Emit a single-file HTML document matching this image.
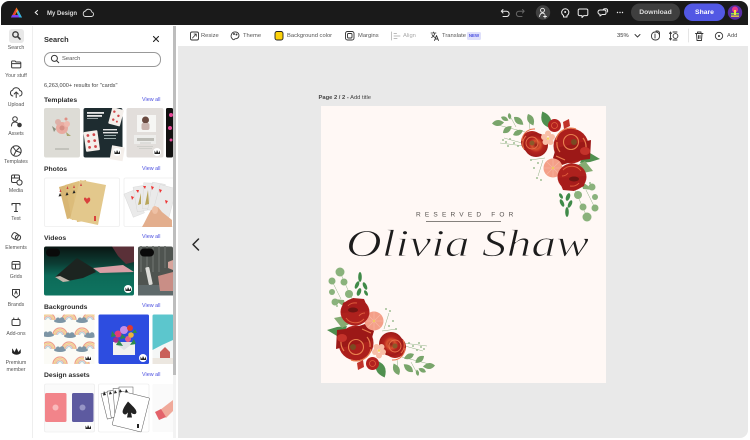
<!DOCTYPE html>
<html><head><meta charset="utf-8">
<style>
html,body{margin:0;padding:0;width:750px;height:440px;overflow:hidden;background:#fff}
body{position:relative;font-family:"Liberation Sans",sans-serif;color:#2c2c2c;filter:blur(.3px)}
.a{position:absolute}
.t{position:absolute;white-space:nowrap;line-height:1;transform:translateY(1px)}
.rail{font-size:5.2px;color:#555;text-align:center;width:32px;left:0}
.h{font-size:6.8px;font-weight:bold;left:44px;color:#2c2c2c}
.v{font-size:5.4px;color:#4b4fe0;left:142px}
.tb{font-size:5.8px;color:#555}
</style></head><body>
<!-- window -->
<div class="a" style="left:0;top:0;width:750px;height:440px;background:#fff"></div>
<div class="a" style="left:178px;top:46px;width:570px;height:392px;background:#e9e9e9;border-radius:0 0 8px 0"></div>
<div class="a" style="left:1px;top:1px;width:747px;height:24px;background:#1a1a1a;border-radius:8px 8px 0 0"></div>
<div class="a" style="left:32px;top:26px;width:1px;height:412px;background:#eee"></div>
<div class="a" style="left:173px;top:26px;width:3px;height:412px;background:#f3f3f3"></div>
<div class="a" style="left:173px;top:26px;width:3px;height:349px;background:#bdbdbd"></div>

<!-- top bar -->
<svg class="a" style="left:0;top:0" width="750" height="26" viewBox="0 0 750 26" fill="none" stroke-linecap="round" stroke-linejoin="round">
 <path d="M16.5 7.500 L22 17.500 H19 L16.500 12 L14 17.500 H11 Z" fill="#f5a623"/>
 <path d="M16.500 7.500 L11 17.500 H13.500 L16.500 11 Z" fill="#e8392b"/>
 <path d="M15 15 H19 L20 17.500 H11 L12 15Z" fill="#7a3ff2"/>
 <path d="M18 10 L22 17.500 H19.500 L17 12.500Z" fill="#2fb3e8"/>
 <path d="M37.500 10.500 L35.200 12.500 L37.500 14.500" stroke="#eee" stroke-width="1.100"/>
 <path d="M85 16.500 H91.500 a2.300 2.300 0 0 0 .3 -4.500 a3.400 3.400 0 0 0 -6.300 -1 a2.900 2.900 0 0 0 -.5 5.500Z" stroke="#ddd" stroke-width=".9"/>
 <path d="M503 9.500 L501.300 11.200 L503 13 M501.500 11.200 H506.500 a2.600 2.600 0 0 1 0 5.300 H503" stroke="#e8e8e8" stroke-width="1"/>
 <path d="M522.500 9.500 L524.200 11.200 L522.500 13 M524 11.200 H519 a2.600 2.600 0 0 0 0 5.300 H522" stroke="#666" stroke-width="1"/>
 <circle cx="543" cy="12.500" r="7.200" fill="#414141"/>
 <circle cx="542.500" cy="10.300" r="2" stroke="#eee" stroke-width=".9"/>
 <path d="M539.500 16.500 C540 14 541 13 542.500 13 C543.500 13 544 13.400 544.500 14 M545 15 V18 M543.600 16.500 H546.500" stroke="#eee" stroke-width=".9"/>
 <path d="M563.500 15.500 a3.600 3.600 0 1 1 3.500 0 V17 h-3.500Z" stroke="#eee" stroke-width="1"/><circle cx="565.200" cy="12" r="1" fill="#eee"/>
 <path d="M579.500 9 H586.500 a1.300 1.300 0 0 1 1.300 1.300 V14.300 a1.300 1.300 0 0 1 -1.300 1.300 H583.800 L582 17.500 V15.600 H579.500 a1.300 1.300 0 0 1 -1.300 -1.300 V10.300 a1.300 1.300 0 0 1 1.300 -1.300Z" stroke="#eee" stroke-width="1"/>
 <path d="M600 10 H604.500 a1.500 1.500 0 0 1 1.500 1.500 V13 a1.500 1.500 0 0 1 -1.500 1.500 H602 L600 16 V14.300 a2 2 0 0 1 -2 -2 A2.300 2.300 0 0 1 600 10Z" stroke="#eee" stroke-width="1"/>
 <path d="M603 10 A2 2 0 0 1 605 8.800 H606 a1.600 1.600 0 0 1 1.600 1.600 V12 " stroke="#eee" stroke-width="1"/>
 <circle cx="617.500" cy="12.500" r=".7" fill="#eee"/><circle cx="620" cy="12.500" r=".7" fill="#eee"/><circle cx="622.500" cy="12.500" r=".7" fill="#eee"/>
 <rect x="631" y="3.500" width="49" height="17.500" rx="8.700" fill="#3f3f3f"/>
 <rect x="684" y="3.500" width="41" height="17.500" rx="8.700" fill="#5258e4"/>
 <circle cx="735" cy="12.500" r="7.200" fill="#5a2ea6"/>
 <circle cx="735" cy="9.500" r="3" fill="#e8388c"/><rect x="731" y="13" width="8" height="1.500" fill="#7fe04a"/><rect x="734" y="10" width="2" height="5" fill="#f3e13c"/><rect x="731" y="15.500" width="8" height="1.300" fill="#f3e13c"/>
</svg>
<div class="t" style="left:47px;top:9.500px;font-size:6px;font-weight:bold;color:#ddd">My Design</div>
<div class="t" style="left:631px;width:49px;top:9px;font-size:6.800px;font-weight:bold;color:#ddd;text-align:center">Download</div>
<div class="t" style="left:684px;width:41px;top:9px;font-size:6.800px;font-weight:bold;color:#fff;text-align:center">Share</div>

<!-- rail -->
<div class="a" style="left:9px;top:29px;width:15px;height:14px;border-radius:3px;background:#e8e8e8"></div>
<svg class="a" style="left:0;top:26px" width="33" height="350" viewBox="0 26 33 350" fill="none" stroke="#3a3a3a" stroke-width="1" stroke-linecap="round" stroke-linejoin="round">
 <circle cx="15.500" cy="34.500" r="2.700" stroke-width="1.400"/><path d="M17.600 36.600 L20 39" stroke-width="1.600"/>
 <path d="M12 61 H15 L16 62 H20 a.8.8 0 0 1 .8.8 V67 a.9.9 0 0 1 -.9.9 H12.500 a.9.9 0 0 1 -.9-.9 V61.600Z"/><path d="M11.800 63.600 H20.600"/>
 <path d="M12.800 96 A3 3 0 0 1 12.600 90.200 A3.800 3.800 0 0 1 19.800 90.500 A2.800 2.800 0 0 1 19.600 96 M16.200 97.500 V92 M14.200 94 L16.200 92 L18.200 94"/>
 <circle cx="15" cy="119" r="2.300"/><path d="M11.500 126 C11.500 123 13 122 15 122 C16 122 17 122.500 17.500 123"/><circle cx="19.500" cy="125" r="1.800" fill="#3a3a3a"/>
 <circle cx="16" cy="151" r="5.200"/><path d="M13 147 L16 151 L19.500 147.500 M14 155 L16 151 L20.500 152.500"/>
 <rect x="11.500" y="175" width="8" height="7.500" rx="1.500"/><path d="M11.500 178 H19.500 M14.500 175 V178"/><circle cx="19.500" cy="182.500" r="2.600" fill="#fff"/>
 <path d="M12 203.500 H20 M16 203.500 V211.500 M14.500 211.500 H17.500 M12 203.500 V205 M20 203.500 V205" stroke-width="1.100"/>
 <rect x="12" y="233" width="6" height="6" rx="2" transform="rotate(30 15 236)"/><circle cx="18" cy="237.500" r="2.600"/>
 <rect x="12" y="261.500" width="8" height="7.500" rx="1.400"/><path d="M12 264.300 H20 M15.500 264.300 V269"/>
 <path d="M12.500 289.500 H19.500 V295 L16 297.800 L12.500 295Z"/><path d="M14.800 294 L16 290.800 L17.200 294"/>
 <rect x="12" y="319.500" width="8" height="6" rx="1.200"/><path d="M13.800 319.500 V318 M18.200 319.500 V318"/>
 <path d="M12.500 349 L14.500 352.500 L16.500 348.500 L18.500 352.500 L20.500 349.500 V353 C18 355 15 355 12.500 353Z" fill="#222" stroke="#222" stroke-width=".5"/>
</svg>
<div class="t rail" style="top:44.500px">Search</div>
<div class="t rail" style="top:73px">Your stuff</div>
<div class="t rail" style="top:102px">Upload</div>
<div class="t rail" style="top:130.500px">Assets</div>
<div class="t rail" style="top:159px">Templates</div>
<div class="t rail" style="top:188px">Media</div>
<div class="t rail" style="top:216px">Text</div>
<div class="t rail" style="top:245px">Elements</div>
<div class="t rail" style="top:273.500px">Grids</div>
<div class="t rail" style="top:302px">Brands</div>
<div class="t rail" style="top:331px">Add-ons</div>
<div class="t rail" style="top:359.500px">Premium</div>
<div class="t rail" style="top:366.500px">member</div>

<!-- panel -->
<div class="t" style="left:44px;top:34.500px;font-size:7.400px;font-weight:bold">Search</div>
<svg class="a" style="left:151px;top:34px" width="10" height="10" fill="none" stroke="#222" stroke-width="1.100" stroke-linecap="round"><path d="M2.500 2.500 L7.500 7.500 M7.500 2.500 L2.500 7.500"/></svg>
<div class="a" style="left:44px;top:52px;width:115px;height:13px;border:1px solid #999;border-radius:7px"></div>
<svg class="a" style="left:50px;top:54px" width="10" height="10" fill="none" stroke="#333" stroke-width="1"><circle cx="4.400" cy="4.400" r="3"/><path d="M6.600 6.600 L9 9"/></svg>
<div class="t" style="left:62px;top:55.500px;font-size:5.800px;color:#555">Search</div>
<div class="t" style="left:44px;top:83px;font-size:5.600px;color:#444">6,263,000+ results for "cards"</div>
<div class="t h" style="top:97px">Templates</div><div class="t v" style="top:97px">View all</div>
<div class="t h" style="top:166px">Photos</div><div class="t v" style="top:165.500px">View all</div>
<div class="t h" style="top:235px">Videos</div><div class="t v" style="top:234px">View all</div>
<div class="t h" style="top:303.500px">Backgrounds</div><div class="t v" style="top:303px">View all</div>
<div class="t h" style="top:372px">Design assets</div><div class="t v" style="top:371.500px">View all</div>

<div class="a" style="left:44px;top:108px;width:129px;height:330px;overflow:hidden">
<svg class="a" style="left:-44px;top:-108px" width="173" height="438" viewBox="0 0 173 438">
 <defs>
  <linearGradient id="vg" x1="0" y1="0" x2="0" y2="1"><stop offset="0" stop-color="#0a1512"/><stop offset=".35" stop-color="#0c3d34"/><stop offset=".6" stop-color="#0d6b59"/><stop offset="1" stop-color="#0e7460"/></linearGradient>
  <g id="rb" fill="none" stroke-width="1.300"><path d="M-7 0 a7 7 0 0 1 14 0" stroke="#eea28b"/><path d="M-5.500 0 a5.500 5.500 0 0 1 11 0" stroke="#f0d28a"/><path d="M-4 0 a4 4 0 0 1 8 0" stroke="#ecb3a2"/><path d="M-2.500 0 a2.500 2.500 0 0 1 5 0" stroke="#b9d3dc"/></g>
  <g id="cl" fill="#7d95a5"><ellipse cx="0" cy="0" rx="6" ry="2"/><circle cx="-2" cy="-1.500" r="2"/><circle cx="2" cy="-1.500" r="2.300"/></g>
  <g id="wb"><circle r="4" fill="#fff"/><path d="M-2.500 -1.500 L-1 1 L0 -2 L1.500 1 L3 -1.500 V2 H-2.500Z" fill="#222"/></g>
 </defs>
 <!-- T1 -->
 <rect x="44" y="108" width="36" height="49.500" rx="2" fill="#dddcd6"/>
 <g><circle cx="62" cy="128" r="6" fill="#e9aaa0"/><circle cx="58" cy="122" r="3" fill="#ddb0a8"/><circle cx="67" cy="124" r="3" fill="#efb9ae"/><circle cx="62" cy="128" r="2.500" fill="#d58f85"/><path d="M56 129 L52 126 L54 132Z" fill="#8a8f7e"/><path d="M66 132 L71 136 L67 136Z" fill="#a9a56e"/><circle cx="66" cy="119" r="1.500" fill="#e08f84"/></g>
 <rect x="55" y="148.500" width="14" height="1" fill="#a8a8a0"/>
 <!-- T2 -->
 <rect x="83.500" y="108" width="39" height="49.500" rx="2" fill="#1e2c30"/>
 <rect x="87" y="112" width="17" height="1.800" fill="#e8e8e8"/><rect x="87" y="115" width="15" height="1.800" fill="#e8e8e8"/>
 <rect x="87" y="118" width="11" height="1" fill="#98a2a4"/>
 <g transform="rotate(15 115 117)"><rect x="110" y="108" width="12" height="17" rx="1" fill="#f4efeb"/><circle cx="113" cy="112" r="1.200" fill="#d0474b"/><circle cx="118" cy="115" r="1.200" fill="#d0474b"/><circle cx="114" cy="120" r="1.200" fill="#d0474b"/><circle cx="118" cy="121" r="1" fill="#d0474b"/></g>
 <g transform="rotate(-8 92 143)"><rect x="85" y="131" width="14" height="20" rx="1" fill="#f4efeb"/><circle cx="89" cy="135" r="1.400" fill="#d0474b"/><circle cx="95" cy="135" r="1.400" fill="#d0474b"/><circle cx="89" cy="141" r="1.400" fill="#d0474b"/><circle cx="95" cy="141" r="1.400" fill="#d0474b"/><circle cx="89" cy="147" r="1.400" fill="#d0474b"/><circle cx="95" cy="147" r="1.400" fill="#d0474b"/></g>
 <rect x="103" y="129" width="14" height="1.400" fill="#e5e5e5"/><rect x="103" y="132" width="15" height="1.400" fill="#e5e5e5"/><rect x="104" y="135" width="12" height="1" fill="#9aa"/><rect x="104" y="138" width="12" height="1" fill="#9aa"/>
 <g transform="rotate(10 116 152)"><rect x="111" y="146" width="13" height="14" fill="#f4efeb"/></g>
 <use href="#wb" x="117" y="152"/>
 <!-- T3 -->
 <rect x="126.500" y="108" width="37" height="49.500" rx="2" fill="#e2dedb"/>
 <rect x="137" y="115" width="19" height="17" fill="#f6f6f4"/><circle cx="145.500" cy="120" r="3.500" fill="#6a4a40"/><rect x="141.500" y="123" width="8" height="7" rx="2" fill="#c9b3ad"/>
 <rect x="134" y="135" width="22" height="9" fill="#ededeb"/><rect x="137" y="138" width="17" height="3" fill="#bcbcb6"/><rect x="140" y="142.500" width="11" height="1" fill="#cdcdc8"/><rect x="137" y="146" width="16" height="1" fill="#cfcfca"/><rect x="139" y="148" width="13" height="1" fill="#cfcfca"/>
 <use href="#wb" x="157" y="152"/>
 <!-- T4 -->
 <rect x="166" y="108" width="7" height="49.500" rx="1.500" fill="#111"/><circle cx="171" cy="115" r="2" fill="#e84a9a"/><circle cx="170" cy="128" r="2" fill="#e84a9a"/><circle cx="171" cy="140" r="1.500" fill="#e84a9a"/>
 <!-- Photos -->
 <rect x="44.500" y="178" width="75" height="48.500" rx="1.500" fill="#fff" stroke="#eee" stroke-width=".8"/>
 <polygon points="59,187 73,183 82,216 67,219" fill="#d8b674"/>
 <polygon points="65,185 79,181 87,218 72,220" fill="#dcbc7a"/>
 <polygon points="72,183 86,180 92,220 77,222" fill="#dfc07e"/>
 <polygon points="80,180 106,185 98,225 70,219" fill="#e3c88c"/>
 <path d="M87 199 C85 196 83 198 84.500 200.500 L87 204 L90 201 C91 198 89 196 87 199Z" fill="#d9413c"/>
 <path d="M60 193 l1.500 3 l-3 .5Z M67 192 l1.500 3 l-3 .5Z M74 190 l1.500 3 l-3 .5Z" fill="#222"/>
 <path d="M60.500 189 l1 3 l-2 0Z M67.500 186 l1 3 l-2 0Z M74 185 l1 3 l-2 0Z M81 183 l1 3 l-2 0Z" fill="#c44"/>
 <rect x="94" y="216" width="2" height="5" fill="#d9413c"/>
 <rect x="124" y="178" width="50" height="48.500" rx="1.500" fill="#fff" stroke="#eee" stroke-width=".8"/>
 <g fill="#eaeaea" stroke="#ccc" stroke-width=".3">
  <rect x="128" y="191" width="12" height="25" transform="rotate(-22 134 203)"/>
  <rect x="135" y="186" width="13" height="25" transform="rotate(-10 141 198)"/>
  <rect x="143" y="183" width="13" height="26" transform="rotate(3 149 196)"/>
  <rect x="150" y="183" width="13" height="28" transform="rotate(10 156 197)"/>
  <rect x="156" y="186" width="17" height="30" transform="rotate(15 164 201)"/>
 </g>
 <path d="M131 196 l3 1 l-2 3Z M136 190 l3 0 l-1 3Z M143 186 l3 0 l-1 3Z M151 186 l3 1 l-2 3Z M159 189 l3 1 l-2 3Z M165 200 l3 1 l-2 3Z" fill="#e33"/>
 <path d="M148 190 L145 205 L149 204Z M141 193 L138 205 L141 204Z" fill="#b8a55a"/>
 <path d="M151 210 L158 207 L162 212 L172 220 V227 H142 C145 222 147 217 151 210Z" fill="#e3ae8d"/><ellipse cx="155" cy="210" rx="3" ry="4" fill="#eec0a4"/>
 <!-- Videos -->
 <rect x="44" y="246.500" width="90" height="49" rx="2" fill="url(#vg)"/>
 <path d="M93 268 L123 265 L134 272 L100 273Z" fill="#d89ea5"/>
 <path d="M55 277 L77 258 L93 268 L96 272 L83 278 L63 282Z" fill="#1c2420"/>
 <path d="M55 277 L63 282 L70 281 L60 276Z" fill="#bfb7ab"/>
 <path d="M112 246.500 L118 256 L126 264 L134 262 V246.500Z" fill="#5a3038"/>
 <rect x="46" y="248.500" width="14" height="8" rx="4" fill="#0a0a0a"/>
 <use href="#wb" x="128" y="289"/>
 <rect x="138" y="246.500" width="35" height="49" rx="2" fill="#4f5450"/>
 <path d="M141 246 V272 M147 246 V272 M153 246 V272 M159 246 V272 M165 246 V268" stroke="#666b67" stroke-width="1.500"/>
 <path d="M138 285 H173 V295.500 H138Z" fill="#5f6a6b"/>
 <rect x="147" y="267" width="4" height="18" rx="1" fill="#dcdcd8" transform="rotate(-12 149 276)"/>
 <path d="M158 276 L173 272 V291 H160Z" fill="#c98e86"/><path d="M168 262 L173 260 V270 L168 268Z" fill="#d8a49c"/>
 <rect x="140" y="248.500" width="14" height="8" rx="4" fill="#0a0a0a"/>
 <!-- BG1 -->
 <svg x="44" y="314.500" width="50.500" height="49.500" viewBox="44 314.500 50.500 49.500">
  <rect x="44" y="314.500" width="50.500" height="49.500" fill="#fbfbf6"/>
  <use href="#rb" x="48" y="320"/><use href="#rb" x="69" y="320"/><use href="#rb" x="90" y="320"/>
  <use href="#rb" x="60" y="335"/><use href="#rb" x="82" y="335"/>
  <use href="#rb" x="48" y="349"/><use href="#rb" x="69" y="349"/><use href="#rb" x="90" y="349"/>
  <use href="#rb" x="60" y="364"/><use href="#rb" x="82" y="364"/>
  <use href="#cl" x="60" y="321"/><use href="#cl" x="82" y="321"/>
  <use href="#cl" x="48" y="335"/><use href="#cl" x="70" y="336"/><use href="#cl" x="90" y="336"/>
  <use href="#cl" x="60" y="350"/><use href="#cl" x="82" y="350"/>
  <use href="#wb" x="88" y="358"/>
 </svg>
 <!-- BG2 -->
 <rect x="98.500" y="314.500" width="50.500" height="49.500" rx="1.500" fill="#2d4de0"/>
 <path d="M113 342 H135 V355 H113Z" fill="#f2f2f0"/><path d="M113 342 L124 350 L135 342Z" fill="#e2e2e4"/>
 <circle cx="118" cy="334" r="3.500" fill="#e23d7d"/><circle cx="124" cy="330" r="4" fill="#c58fe8"/><circle cx="130" cy="328" r="3" fill="#e03a2e"/><circle cx="116" cy="340" r="2.800" fill="#a32c8f"/><circle cx="128" cy="339" r="3" fill="#e85d8a"/><circle cx="131" cy="335" r="2.800" fill="#e9b43c"/>
 <path d="M112 331 L116 336 L111 337Z M119 340 L123 346 L116 345Z M134 339 L130 345 L136 344Z M122 334 L126 338 L120 339Z M135 329 L132 333 L137 333Z" fill="#2e8a4e"/>
 <use href="#wb" x="143" y="358"/>
 <!-- BG3 -->
 <rect x="152.500" y="314.500" width="21" height="49.500" rx="1.500" fill="#5cc6cd"/>
 <path d="M152.500 350 L162 345 L173 340 V358 H152.500Z" fill="#f4f6f6"/><path d="M160 352 L165 347 L170 352 V358 H160Z" fill="#c9605a"/><rect x="152.500" y="358" width="21" height="6" fill="#ece7e0"/>
 <!-- DA1 -->
 <rect x="44.500" y="384" width="50" height="48" rx="1.500" fill="#fafafa" stroke="#e8e8e8" stroke-width=".6"/>
 <rect x="45" y="393" width="21.500" height="29" rx="1.500" fill="#f2848a"/><circle cx="55.500" cy="407.500" r="3" fill="#fcd0d2" opacity=".7"/>
 <rect x="72" y="393" width="21.500" height="29" rx="1.500" fill="#5d5aa0"/><circle cx="82.500" cy="407.500" r="3" fill="#b0aed6" opacity=".7"/>
 <use href="#wb" x="88" y="427"/>
 <!-- DA2 -->
 <rect x="98.500" y="384" width="50.500" height="48" rx="1.500" fill="#fff" stroke="#e8e8e8" stroke-width=".6"/>
 <g fill="#fff" stroke="#555" stroke-width=".5">
  <rect x="104" y="392" width="13" height="26" transform="rotate(-14 110 405)"/>
  <rect x="109" y="390" width="14" height="27" transform="rotate(-9 116 403)"/>
  <rect x="114" y="388" width="14" height="28" transform="rotate(-4 121 402)"/>
  <rect x="119" y="387" width="14" height="29" transform="rotate(0 126 401)"/>
  <rect x="116" y="394" width="30" height="35" rx="1" transform="rotate(14 131 411)"/>
 </g>
 <path d="M104 391 l2 4 l-3 .5Z M110 391 l2 3 l-3 .5Z M115 390 l2 3 l-3 .5Z M120 389 l2 3 l-3 .5Z M126 389 l2 3 l-3 .5Z" fill="#222"/>
 <path d="M128 402 C122 410 121 414 125 415 C126 415 127 414 128 413 L127 418 H132 L131 413 C133 415 135 415 136 414 C138 411 133 407 128 402Z" fill="#222" transform="translate(0 -.5)"/>
 <rect x="137" y="424" width="2" height="4" fill="#222"/>
 <!-- DA3 -->
 <rect x="152.500" y="384" width="21" height="48" rx="1.500" fill="#fafafa"/>
 <path d="M160 410 L173 400 V411 L166 418Z" fill="#f0a99a"/><path d="M155 412 L161 409 L166 417 L159 420Z" fill="#e3626a"/>
</svg>
</div>

<!-- toolbar -->
<svg class="a" style="left:178px;top:26px" width="572" height="21" viewBox="178 26 572 21" fill="none" stroke="#333" stroke-width=".9" stroke-linecap="round" stroke-linejoin="round">
 <rect x="190.500" y="32" width="8" height="8" rx="1.500"/><path d="M192.500 38 L196 34.200 M194 34 H196.300 V36.300" stroke-width=".8"/>
 <path d="M235.500 32 a4 4 0 0 0 -3 7 a1.100 1.100 0 0 0 1.900 .3 c.6 -.9 1.300 -.6 2 -.6 a3.400 3.400 0 0 0 -.9 -6.700Z"/><circle cx="234" cy="34" r=".5" fill="#333"/><circle cx="236.500" cy="34.500" r=".5" fill="#333"/>
 <rect x="275" y="31.500" width="8" height="8.500" rx="2" fill="#fdd20a" stroke="#222"/>
 <rect x="345.500" y="31.500" width="8.500" height="8.500" rx="2"/><rect x="347.500" y="33.500" width="4.500" height="4.500" rx="1"/>
 <path d="M391.500 32 V40 M394 33.500 H396.500 M394 36 H400 M394 38.500 H397" stroke="#bbb"/>
 <path d="M431 33 H436 M433.500 32 V33 M435 33 C434 36 433 37 431.500 37.500 M432 34.500 C432.500 36 434 37 435 37.500" stroke-width=".8"/><path d="M434.500 40.500 L436.500 35.500 L438.500 40.500 M435.200 39 H437.800" stroke-width=".9"/>
 <path d="M635 34.500 L637.500 37 L640 34.500"/>
 <rect x="651.500" y="32" width="8" height="8" rx="3.500" stroke-width=".9"/><path d="M656 31 h1.500 a2 2 0 0 1 2 2 v2" stroke-width=".9"/><path d="M655 34 V38" />
 <circle cx="675.500" cy="36" r="2.400"/><path d="M670.500 33 V39 M670.500 32 L669.500 33.500 M670.500 32 L671.500 33.500 M670.500 40 L669.500 38.500 M670.500 40 L671.500 38.500"/><path d="M673 32 h4 M673 40 h4"/>
 <path d="M688.500 29 V42" stroke="#e3e3e3"/>
 <path d="M695.500 33.500 H703 M696.500 33.500 L697 40.500 H701.500 L702 33.500 M697.500 33.500 V32 H701 V33.500 M698.500 35.500 V38.500 M700 35.500 V38.500"/>
 <circle cx="719" cy="36" r="3.700"/><circle cx="719" cy="36" r="1" fill="#333" stroke="none"/>
</svg>
<div class="t tb" style="left:201px;top:32.500px">Resize</div>
<div class="t tb" style="left:243px;top:32.500px">Theme</div>
<div class="t tb" style="left:287px;top:32.500px">Background color</div>
<div class="t tb" style="left:358px;top:32.500px">Margins</div>
<div class="t tb" style="left:403px;top:32.500px;color:#aaa">Align</div>
<div class="t tb" style="left:442px;top:32.500px">Translate</div>
<div class="a" style="left:467px;top:32px;width:14px;height:8px;border-radius:1.500px;background:#dfe0fb;color:#4b4fe0;font-size:4.400px;font-weight:bold;text-align:center;line-height:8px">NEW</div>
<div class="t tb" style="left:617px;top:32.500px;color:#333">35%</div>
<div class="t tb" style="left:727px;top:32.500px">Add</div>

<!-- canvas -->
<div class="t" style="left:318.500px;top:95px;font-size:5.800px;color:#444"><b>Page 2 / 2 -</b> Add title</div>
<svg class="a" style="left:178px;top:230px" width="36" height="30" fill="none" stroke="#2a2a2a" stroke-width="1.500" stroke-linecap="round" stroke-linejoin="round"><path d="M20.500 9 L15 14.500 L20.500 20"/></svg>

<div class="a" style="left:321px;top:106px;width:285px;height:277px;background:#fff8f5"></div>
<svg class="a" style="left:321px;top:106px" width="285" height="277" viewBox="321 106 285 277">
 <defs>
  <radialGradient id="r1"><stop offset="0" stop-color="#8f1d17"/><stop offset=".35" stop-color="#d9532f"/><stop offset=".6" stop-color="#b5231d"/><stop offset="1" stop-color="#9c1a18"/></radialGradient>
  <path id="lf" d="M0 0 Q5 -5.500 11 0 Q5 5.500 0 0Z"/>
  <g id="fl">
   <g stroke="#8fb083" stroke-width=".5" fill="none">
    <path d="M494 124 L525 132 M509 114 L516 127 M529 118 L530 130"/>
    <path d="M504 138 L522 143 M500 143 L524 146"/>
    <path d="M530 160 L545 158 M538 176 L543 160"/>
    <path d="M587 217 L575 190 M595 208 L586 190"/>
   </g>
   <g fill="#79a56b">
    <use href="#lf" transform="translate(492 123.500) rotate(-5) scale(1.100)"/>
    <use href="#lf" transform="translate(509 113) rotate(80) scale(.6)"/>
    <use href="#lf" transform="translate(501 117) rotate(25) scale(.75)"/>
    <use href="#lf" transform="translate(514 117) rotate(40) scale(1.100)"/>
    <use href="#lf" transform="translate(528 114) rotate(65) scale(1.150)"/>
    <use href="#lf" transform="translate(503 133) rotate(-38) scale(1)"/>
    <use href="#lf" transform="translate(513 135) rotate(-25) scale(1)"/>
    <use href="#lf" fill="#4f8f4f" transform="translate(550 128) rotate(-115) scale(1.650)"/>
   </g>
   <path d="M585 150 L600 159 L590 162 L580 163Z" fill="#4f8f4f"/>
   <path d="M576 166 L585 161 L593 171 L583 173Z" fill="#86ac73"/>
   <path d="M581 181 L594 190 L583 189Z" fill="#86ac73"/>
   <g fill="#8ab27c"><circle cx="592" cy="187" r="3.500"/><circle cx="595" cy="197" r="3"/><circle cx="578" cy="195" r="4"/><circle cx="583" cy="207" r="3.500"/><circle cx="595" cy="208" r="3.500"/><circle cx="587" cy="217" r="4.500"/></g>
   <g fill="#3f8a48"><ellipse cx="568" cy="197" rx="2" ry="4" transform="rotate(20 568 197)"/><ellipse cx="562" cy="203" rx="1.800" ry="4" transform="rotate(-25 562 203)"/><ellipse cx="570" cy="204" rx="1.800" ry="4" transform="rotate(25 570 204)"/><ellipse cx="567" cy="212" rx="1.800" ry="5"/><ellipse cx="561" cy="196" rx="1.500" ry="3" transform="rotate(-30 561 196)"/></g>
   <g fill="#a0c095"><circle cx="506" cy="142" r="1"/><circle cx="510" cy="139" r="1"/><circle cx="514" cy="143" r="1"/><circle cx="508" cy="146" r="1"/><circle cx="518" cy="146" r="1"/><circle cx="503" cy="140" r="1"/><circle cx="537" cy="178" r="1"/><circle cx="541" cy="180" r="1"/><circle cx="534" cy="168" r="1"/><circle cx="538" cy="163" r="1"/><circle cx="531" cy="160" r="1"/><circle cx="590" cy="183" r="1"/></g>
   <circle cx="532" cy="142" r="11" fill="#ad211c"/><circle cx="536" cy="145" r="12" fill="url(#r1)"/><path d="M522 141 a12 12 0 0 1 13 -12 M524 149 a11 11 0 0 1 2 -13" stroke="#e8724a" stroke-width="1" fill="none"/><circle cx="532" cy="143" r="6" fill="none" stroke="#e8724a" stroke-width=".9"/><circle cx="532" cy="143" r="2.500" fill="#8a5a2a"/>
   <circle cx="571" cy="146" r="17.500" fill="#ac1f1c"/><path d="M556 148 L553 158 L562 165 L574 161 L590 159 L591 140 Z" fill="#9c1817"/><path d="M556 140 a15 14 0 0 1 20 -11 M583 138 a14 14 0 0 1 2 14 M560 152 a13 13 0 0 1 -3 -10 M556 156 L565 160" stroke="#e87a4c" stroke-width="1.200" fill="none"/><circle cx="571" cy="142" r="7.500" fill="none" stroke="#e8804e" stroke-width="1.100"/><circle cx="574" cy="142" r="3" fill="#7a4a22"/><ellipse cx="585" cy="151" rx="5" ry="4" fill="#c4322a"/>
   <circle cx="554.500" cy="125.500" r="6.500" fill="#b2211f"/><circle cx="554.500" cy="125.500" r="3" fill="none" stroke="#e0603c" stroke-width=".8"/>
   <path d="M563 122 L569 119 L570 126 L564 129Z" fill="#c1332a"/>
   <g fill="#f8bda6"><circle cx="548" cy="133.500" r="3"/><circle cx="544" cy="137" r="3"/><circle cx="552" cy="137" r="3"/><circle cx="545.500" cy="142" r="3"/><circle cx="550.500" cy="142" r="3"/></g><circle cx="548" cy="138.500" r="1.300" fill="#f5d060"/>
   <circle cx="553" cy="168" r="9.500" fill="#f49f88"/><path d="M553 159 V177 M544 168 H562 M546.500 161.500 L559.500 174.500 M559.500 161.500 L546.500 174.500" stroke="#f7b8a5" stroke-width=".6"/><circle cx="553" cy="168" r="1.300" fill="#f0c860"/>
   <ellipse cx="572" cy="177" rx="14.500" ry="13.500" fill="#ae211d"/><path d="M558 178 L563 190 L574 191 L584 186 L586 176Z" fill="#a71c1b"/><path d="M563 170 a11 10 0 0 1 18 1 M562 176 a7 6 0 0 0 6 -3 M570 186 a8 6 0 0 0 9 -3" stroke="#df5c3c" stroke-width="1" fill="none"/><ellipse cx="574" cy="179" rx="5" ry="2.500" fill="#6f1512"/>
  </g>
 </defs>
 <use href="#fl"/>
 <use href="#fl" transform="rotate(180 463.500 244.500)"/>
 <rect x="426" y="221" width="75" height=".9" fill="#787470"/>
 <text x="416" y="216.500" font-family="Liberation Sans, sans-serif" font-size="6.500" letter-spacing="4.200" fill="#575350">RESERVED FOR</text>
 <text x="346" y="256" font-family="Liberation Serif, serif" font-style="italic" font-size="38" textLength="243" lengthAdjust="spacingAndGlyphs" fill="#1c1c1c" stroke="#fff8f5" stroke-width=".85" paint-order="fill stroke">Olivia Shaw</text>
</svg>
</body></html>
